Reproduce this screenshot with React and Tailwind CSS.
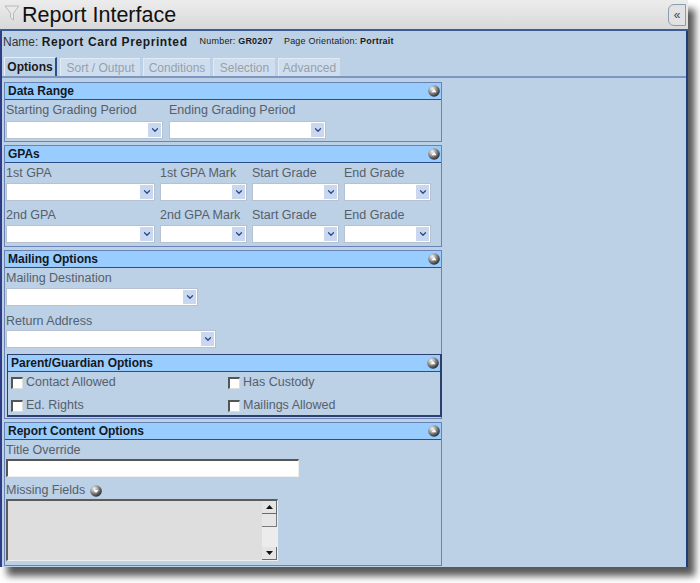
import { ChevronDown } from "lucide-react";

const font = "font-['Liberation_Sans',Arial,sans-serif]";

function Sphere({ down = false }) {
  return (
    <svg width="12" height="12" viewBox="0 0 12 12">
      <defs>
        <radialGradient id={down ? "sg-d" : "sg-u"} cx="35%" cy="30%" r="75%">
          <stop offset="0%" stopColor="#f8f8f8" />
          <stop offset="50%" stopColor="#8a8a8a" />
          <stop offset="100%" stopColor="#222" />
        </radialGradient>
      </defs>
      <circle cx="6" cy="6" r="5.8" fill={`url(#${down ? "sg-d" : "sg-u"})`} />
      {down ? (
        <path d="M3.4 5 L6 8 L8.6 5 Z" fill="#fff" />
      ) : (
        <path d="M3.4 7.2 L6 4 L8.6 7.2 Z" fill="#fff" />
      )}
    </svg>
  );
}

function Select({ className }) {
  return (
    <div className={`flex h-[18px] border border-[#b6c2d2] bg-white ${className}`}>
      <div className="flex-1" />
      <div className="m-[1px] flex w-[13px] items-center justify-center bg-[#c9d7ef]">
        <ChevronDown size={10} strokeWidth={3} className="text-[#2b4a8c]" />
      </div>
    </div>
  );
}

function Label({ children, className = "" }) {
  return <div className={`text-[12.5px] leading-[15px] text-[#56606b] ${className}`}>{children}</div>;
}

function Checkbox({ label }) {
  return (
    <div className="flex h-[15px] items-center gap-[3px]">
      <div className="h-[12px] w-[12px] border-t-2 border-l-2 border-t-[#555] border-l-[#555] border-b border-r border-b-[#ddd] border-r-[#ddd] bg-white" />
      <span className="text-[12.5px] leading-[15px] text-[#56606b]">{label}</span>
    </div>
  );
}

function Panel({ title, children, className = "", sub = false }) {
  return (
    <div
      className={`border ${sub ? "border-[#2c3f6e] border-b-2 border-r-2" : "border-[#6883b4]"} ${className}`}
    >
      <div className="flex h-[17px] items-center justify-between border-b border-[#2a4e8a] bg-[#99ccff] pl-[3px] pr-[1px]">
        <span className="text-[12px] font-bold leading-[16px] text-[#141820]">{title}</span>
        <Sphere />
      </div>
      {children}
    </div>
  );
}

export default function App() {
  const tabs = ["Sort / Output", "Conditions", "Selection", "Advanced"];
  const tabWidths = ["w-[80px]", "w-[67px]", "w-[62px]", "w-[62px]"];

  return (
    <div className={`h-[583px] w-[700px] overflow-hidden bg-white ${font}`}>
      <div className="flex h-[567px] w-[688px] flex-col overflow-hidden shadow-[7px_9px_7px_rgba(0,0,0,0.65)]">
        {/* title bar */}
        <div className="flex h-[31px] shrink-0 items-center border-b-2 border-[#3c5d93] bg-gradient-to-b from-[#ececec] to-[#d9d9d9] pl-[4px]">
          <svg width="16" height="18" viewBox="0 0 16 18" className="mr-[2px] mt-[-4px]">
            <path d="M1 2 L15 2 L9.5 9 L9.5 16 L6.5 13.5 L6.5 9 Z" fill="#e9e9e9" stroke="#b9b9b9" strokeWidth="1" />
          </svg>
          <span className="text-[21.5px] leading-[24px] text-[#111]">Report Interface</span>
          <div className="ml-auto mr-[2px] flex h-[22px] w-[18px] items-center justify-center rounded-l-[6px] border border-[#8a9bb5] bg-[#e2e2e2] text-[12px] leading-none text-[#444]">
            «
          </div>
        </div>

        {/* body */}
        <div className="flex flex-1 flex-col border-l-2 border-r-2 border-l-[#2e3b86] border-r-[#1f3d7a] bg-[#bcd0e6]">
          <div className="flex h-[22px] items-center pl-[1px] text-[#1b1b1b]">
            <span className="text-[12px]">
              <span className="text-[#333]">Name: </span>
              <span className="font-bold tracking-[0.6px]">Report Card Preprinted</span>
            </span>
            <span className="ml-[12px] text-[9px] tracking-[0.2px]">
              Number: <span className="font-semibold">GR0207</span>
            </span>
            <span className="ml-[11px] text-[9px] tracking-[0.2px]">
              Page Orientation: <span className="font-bold">Portrait</span>
            </span>
          </div>

          <div className="mt-[5px] flex h-[20px] items-end gap-[3px] border-b-2 border-[#7d97c0] pl-[2px]">
            <div className="flex h-[19px] w-[53px] items-center justify-center border-l border-t border-r-2 border-l-[#e6eef8] border-t-[#e6eef8] border-r-[#2a4e8a] bg-[#bcd0e6] text-[12px] font-bold text-[#1a1a1a]">
              Options
            </div>
            {tabs.map((t, i) => (
              <div
                key={t}
                className={`flex h-[18px] items-center justify-center border-l border-t border-[#e2eaf4] bg-[#cfdeee] text-[12px] text-[#98a0aa] ${tabWidths[i]}`}
              >
                {t}
              </div>
            ))}
          </div>

          <div className="mt-[4px] flex w-[440px] flex-col gap-[3px] pl-[2px]">
            <Panel title="Data Range">
              <div className="px-[1px] pb-[2px] pt-[3px]">
                <div className="flex gap-[6px]">
                  <div>
                    <Label>Starting Grading Period</Label>
                    <Select className="mt-[3px] w-[157px]" />
                  </div>
                  <div>
                    <Label>Ending Grading Period</Label>
                    <Select className="mt-[3px] w-[157px]" />
                  </div>
                </div>
              </div>
            </Panel>

            <Panel title="GPAs">
              <div className="flex flex-col gap-[7px] px-[1px] pb-[3px] pt-[3px]">
                {[
                  ["1st GPA", "1st GPA Mark"],
                  ["2nd GPA", "2nd GPA Mark"],
                ].map(([a, b]) => (
                  <div key={a} className="flex gap-[5px]">
                    <div>
                      <Label>{a}</Label>
                      <Select className="mt-[2px] w-[149px]" />
                    </div>
                    <div>
                      <Label>{b}</Label>
                      <Select className="mt-[2px] w-[87px]" />
                    </div>
                    <div>
                      <Label>Start Grade</Label>
                      <Select className="mt-[2px] w-[87px]" />
                    </div>
                    <div>
                      <Label>End Grade</Label>
                      <Select className="mt-[2px] w-[87px]" />
                    </div>
                  </div>
                ))}
              </div>
            </Panel>

            <Panel title="Mailing Options">
              <div className="px-[1px] pb-[1px] pt-[3px]">
                <Label>Mailing Destination</Label>
                <Select className="mt-[2px] w-[192px]" />
                <Label className="mt-[8px]">Return Address</Label>
                <Select className="mt-[1px] w-[210px]" />
                <Panel title="Parent/Guardian Options" sub className="-mr-[2px] ml-[1px] mt-[6px]">
                  <div className="grid grid-cols-[217px_1fr] gap-y-[8px] pb-[2px] pl-[3px] pt-[3px]">
                    <Checkbox label="Contact Allowed" />
                    <Checkbox label="Has Custody" />
                    <Checkbox label="Ed. Rights" />
                    <Checkbox label="Mailings Allowed" />
                  </div>
                </Panel>
              </div>
            </Panel>

            <Panel title="Report Content Options">
              <div className="px-[1px] pb-[4px] pt-[3px]">
                <Label>Title Override</Label>
                <div className="mt-[1px] h-[18px] w-[293px] border-t-2 border-l-2 border-t-[#555] border-l-[#555] border-b border-r border-b-[#eee] border-r-[#eee] bg-white" />
                <div className="mt-[6px] flex items-center gap-[5px]">
                  <Label>Missing Fields</Label>
                  <Sphere down />
                </div>
                <div className="mt-[1px] flex h-[62px] w-[272px] border-t-2 border-l-2 border-t-[#5a5a5a] border-l-[#5a5a5a] border-b border-r border-b-[#eee] border-r-[#eee] bg-[#dedede]">
                  <div className="flex-1" />
                  <div className="flex w-[15px] flex-col bg-[#ececec]">
                    <div className="flex h-[13px] items-center justify-center border-b border-r border-[#6a6a6a] bg-[#e4e4e4]">
                      <svg width="7" height="4" viewBox="0 0 7 4"><path d="M0 4 L3.5 0 L7 4 Z" fill="#111" /></svg>
                    </div>
                    <div className="h-[13px] border-b border-r border-[#7a7a7a] bg-[#e6e6e6]" />
                    <div className="flex-1" />
                    <div className="flex h-[13px] items-center justify-center border-b border-r border-[#6a6a6a] bg-[#e4e4e4]">
                      <svg width="7" height="4" viewBox="0 0 7 4"><path d="M0 0 L3.5 4 L7 0 Z" fill="#111" /></svg>
                    </div>
                  </div>
                </div>
              </div>
            </Panel>
          </div>
        </div>
      </div>
    </div>
  );
}
